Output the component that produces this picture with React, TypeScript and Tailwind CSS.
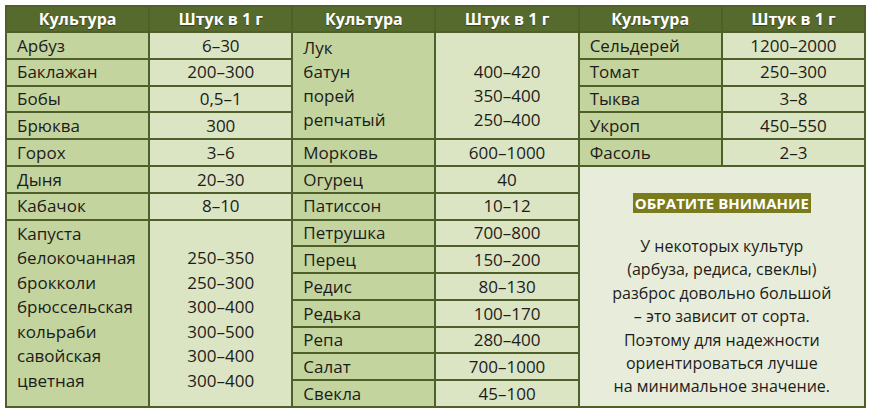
type Row = { name: string; value: string };

const left: Row[] = [
  { name: "Арбуз", value: "6–30" },
  { name: "Баклажан", value: "200–300" },
  { name: "Бобы", value: "0,5–1" },
  { name: "Брюква", value: "300" },
  { name: "Горох", value: "3–6" },
  { name: "Дыня", value: "20–30" },
  { name: "Кабачок", value: "8–10" },
];

const cabbage: Row[] = [
  { name: "белокочанная", value: "250–350" },
  { name: "брокколи", value: "250–300" },
  { name: "брюссельская", value: "300–400" },
  { name: "кольраби", value: "300–500" },
  { name: "савойская", value: "300–400" },
  { name: "цветная", value: "300–400" },
];

const onion: Row[] = [
  { name: "батун", value: "400–420" },
  { name: "порей", value: "350–400" },
  { name: "репчатый", value: "250–400" },
];

const middle: Row[] = [
  { name: "Морковь", value: "600–1000" },
  { name: "Огурец", value: "40" },
  { name: "Патиссон", value: "10–12" },
  { name: "Петрушка", value: "700–800" },
  { name: "Перец", value: "150–200" },
  { name: "Редис", value: "80–130" },
  { name: "Редька", value: "100–170" },
  { name: "Репа", value: "280–400" },
  { name: "Салат", value: "700–1000" },
  { name: "Свекла", value: "45–100" },
];

const right: Row[] = [
  { name: "Сельдерей", value: "1200–2000" },
  { name: "Томат", value: "250–300" },
  { name: "Тыква", value: "3–8" },
  { name: "Укроп", value: "450–550" },
  { name: "Фасоль", value: "2–3" },
];

const note = [
  "У некоторых культур",
  "(арбуза, редиса, свеклы)",
  "разброс довольно большой",
  "– это зависит от сорта.",
  "Поэтому для надежности",
  "ориентироваться лучше",
  "на минимальное значение.",
];

const nameCell = "bg-[#c4d49e] pl-[10px] flex items-center";
const valueCell = "bg-[#dbe5c3] flex items-center justify-center";

const Header = () => (
  <>
    <div className="bg-[#576a2d] flex items-center justify-center text-white font-bold text-[16px] [text-shadow:0_1px_1px_rgba(0,0,0,0.4)]">
      Культура
    </div>
    <div className="bg-[#576a2d] flex items-center justify-center text-white font-bold text-[16px] [text-shadow:0_1px_1px_rgba(0,0,0,0.4)]">
      Штук в 1 г
    </div>
  </>
);

const SimpleRows = ({ rows }: { rows: Row[] }) => (
  <>
    {rows.map((r) => (
      <div key={r.name} className="contents">
        <div className={nameCell}>{r.name}</div>
        <div className={valueCell}>{r.value}</div>
      </div>
    ))}
  </>
);

const Sub = ({ children }: { children: React.ReactNode }) => (
  <div className="flex-1 grid grid-cols-2 grid-rows-[24px_repeat(14,minmax(0,1fr))] gap-[2px]">
    {children}
  </div>
);

export default function App() {
  return (
    <div className="bg-white w-[872px] h-[418px] pt-[5px] pl-[5px]">
      <div
        className="w-[861px] h-[403px] flex gap-[2px] p-[2px] bg-[#4e5f2a] text-[#1c1c1a] text-[17px]"
        style={{ fontFamily: '"Open Sans", "Noto Sans", sans-serif' }}
      >
        <Sub>
          <Header />
          <SimpleRows rows={left} />
          <div className="bg-[#c4d49e] pl-[10px] row-span-7 leading-[24.5px] pt-[1px]">
            <div>Капуста</div>
            {cabbage.map((c) => (
              <div key={c.name}>{c.name}</div>
            ))}
          </div>
          <div className="bg-[#dbe5c3] row-span-7 leading-[24.5px] pt-[1px] text-center">
            <div>&nbsp;</div>
            {cabbage.map((c) => (
              <div key={c.name}>{c.value}</div>
            ))}
          </div>
        </Sub>
        <Sub>
          <Header />
          <div className="bg-[#c4d49e] pl-[10px] row-span-4 leading-[24px] pt-[3px]">
            <div>Лук</div>
            {onion.map((c) => (
              <div key={c.name}>{c.name}</div>
            ))}
          </div>
          <div className="bg-[#dbe5c3] row-span-4 leading-[24px] pt-[3px] text-center">
            <div>&nbsp;</div>
            {onion.map((c) => (
              <div key={c.name}>{c.value}</div>
            ))}
          </div>
          <SimpleRows rows={middle} />
        </Sub>
        <Sub>
          <Header />
          <SimpleRows rows={right} />
          <div className="bg-[#e8eddb] col-span-2 row-span-9 flex flex-col items-center pt-[26px]">
            <div className="bg-[#797b1c] text-white font-bold text-[15px] leading-[20px] px-[2px]">
              ОБРАТИТЕ ВНИМАНИЕ
            </div>
            <div className="mt-[22px] text-center text-[16px] leading-[23.4px]">
              {note.map((l) => (
                <div key={l}>{l}</div>
              ))}
            </div>
          </div>
        </Sub>
      </div>
    </div>
  );
}
